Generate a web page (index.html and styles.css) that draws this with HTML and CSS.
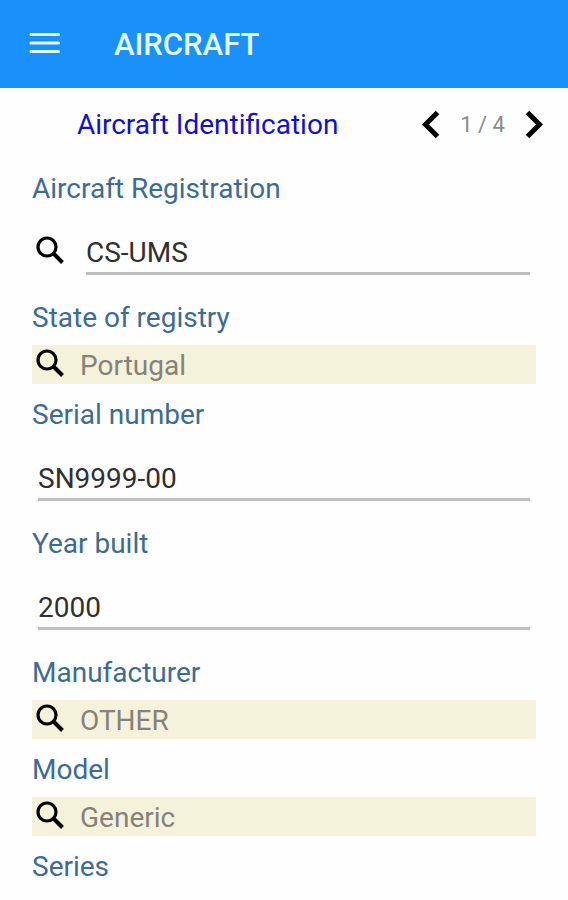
FILE: index.html
```html
<!DOCTYPE html>
<html lang="en">

<head>
    <meta charset="UTF-8">
    <meta name="viewport" content="width=device-width, initial-scale=1.0">
    <title>Aircraft</title>
    <link rel="stylesheet" href="styles.css">
</head>

<body>
    <svg class="sprite" aria-hidden="true">
        <symbol id="search" viewBox="0 0 28 28">
            <circle cx="11" cy="11" r="9" fill="none" stroke="currentColor" stroke-width="3.200"/>
            <path d="M17 17L26.500 26.500" fill="none" stroke="currentColor" stroke-width="4"/>
        </symbol>
    </svg>

    <header class="topbar">
        <button class="menu" type="button" aria-label="Menu">
            <svg width="32" height="24" viewBox="0 0 32 24">
                <path d="M3 2.500H30.500M3 11H30.500M3 19.500H30.500" fill="none" stroke="#e2fbff" stroke-width="3" stroke-linecap="round"/>
            </svg>
        </button>
        <h1>AIRCRAFT</h1>
    </header>

    <main>
        <div class="section">
            <h2>Aircraft Identification</h2>
            <div class="pager">
                <button type="button" aria-label="Previous">
                    <svg width="20" height="30" viewBox="0 0 20 30">
                        <path d="M16.500 2.500L4.500 14.500L16.500 26.500" fill="none" stroke="#000" stroke-width="5"/>
                    </svg>
                </button>
                <span>1 / 4</span>
                <button type="button" aria-label="Next">
                    <svg width="20" height="30" viewBox="0 0 20 30">
                        <path d="M3.500 2.500L15.500 14.500L3.500 26.500" fill="none" stroke="#000" stroke-width="5"/>
                    </svg>
                </button>
            </div>
        </div>

        <form>
            <label for="registration">Aircraft Registration</label>
            <div class="edit">
                <button class="search" type="button" aria-label="Search registration"><svg><use href="#search"/></svg></button>
                <input id="registration" type="text" value="CS-UMS">
            </div>

            <label for="state">State of registry</label>
            <div class="lookup">
                <button class="search" type="button" aria-label="Search state"><svg><use href="#search"/></svg></button>
                <input id="state" type="text" value="Portugal" readonly>
            </div>

            <label for="serial">Serial number</label>
            <div class="edit">
                <input id="serial" type="text" value="SN9999-00">
            </div>

            <label for="year">Year built</label>
            <div class="edit">
                <input id="year" type="text" value="2000">
            </div>

            <label for="manufacturer">Manufacturer</label>
            <div class="lookup">
                <button class="search" type="button" aria-label="Search manufacturer"><svg><use href="#search"/></svg></button>
                <input id="manufacturer" type="text" value="OTHER" readonly>
            </div>

            <label for="model">Model</label>
            <div class="lookup">
                <button class="search" type="button" aria-label="Search model"><svg><use href="#search"/></svg></button>
                <input id="model" type="text" value="Generic" readonly>
            </div>

            <span class="label">Series</span>
        </form>
    </main>
</body>

</html>
```

FILE: styles.css
```css
* {
    box-sizing: border-box;
}

body {
    margin: 0;
    background-color: #fefefe;
    font-family: Roboto, "Liberation Sans", sans-serif;
    font-size: 28px;
    line-height: 34px;
}

h1,
h2 {
    margin: 0;
    font-size: 28px;
}

button {
    display: flex;
    padding: 0;
    border: none;
    background: none;
    color: #000;
    cursor: pointer;
}

.sprite {
    display: none;
}

.topbar {
    display: flex;
    align-items: center;
    gap: 54px;
    height: 88px;
    padding: 0 28px;
    background-color: #1990fa;
    color: #e2fbff;
}

.topbar h1 {
    padding-top: 2px;
    font-size: 31px;
    font-weight: 500;
}

.section {
    display: flex;
    align-items: center;
    height: 70px;
    padding: 4px 24px 0 32px;
}

.section h2 {
    flex: 1;
    padding-right: 38px;
    color: #1111cc;
    font-weight: 400;
    text-align: center;
}

.pager {
    display: flex;
    align-items: center;
    gap: 19px;
    color: #8a8a8a;
    font-size: 22px;
}

form {
    padding: 0 32px 16px;
}

label,
.label {
    display: block;
    padding: 14px 0 10px;
    color: #3c6c92;
}

input {
    flex: 1;
    min-width: 0;
    height: 43px;
    padding: 0;
    border: none;
    border-bottom: 3px solid #bfbfbf;
    outline: none;
    background: none;
    color: #303030;
    font: inherit;
}

.edit {
    display: flex;
    padding: 16px 6px 12px;
}

.search {
    flex: none;
    width: 28px;
    height: 28px;
}

.search svg {
    width: 28px;
    height: 28px;
}

.edit .search {
    margin: 4px 22px 0 -2px;
}

.lookup {
    display: flex;
    height: 39px;
    padding: 4px;
    background-color: #f5f2dc;
}

.lookup .search {
    margin-right: 16px;
}

.lookup input {
    height: 34px;
    border: none;
    color: #85827a;
}
```
